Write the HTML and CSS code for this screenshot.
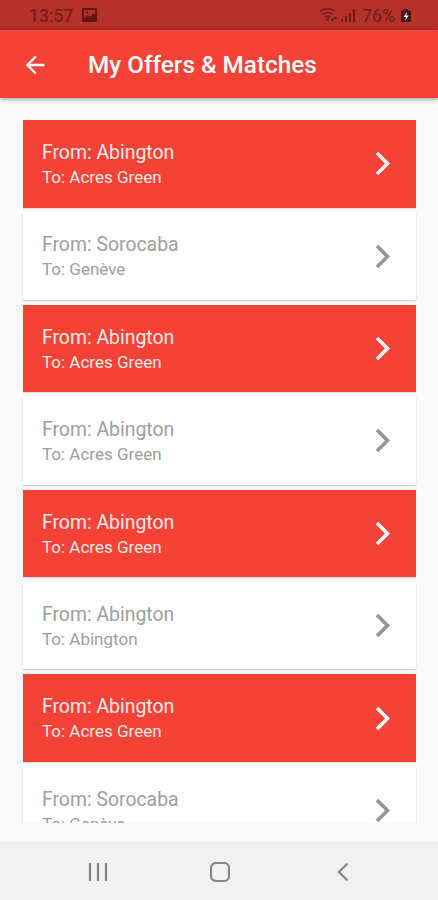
FILE: index.html
```html
<!DOCTYPE html>
<html lang="en">
<head>
    <meta charset="UTF-8">
    <meta name="viewport" content="width=device-width, initial-scale=1.0">
    <title>My Offers &amp; Matches</title>
    <link rel="stylesheet" href="styles.css">
</head>
<body>
<div class="status">
    <span class="time">13:57</span>
    <svg class="picture" viewBox="0 0 15 14">
        <rect width="15" height="14" rx="1.5" fill="#5e1717"/>
        <path d="M2 2h11v5l-2-2-2.500 4L6 7 2 10.500z" fill="#b5312a"/>
        <circle cx="5" cy="4.500" r="1.200" fill="#5e1717"/>
    </svg>
    <svg class="wifi" viewBox="0 0 19 16" fill="none" stroke="#6b1d1b" stroke-width="1.6">
        <path d="M1 4.500q7.500-6 15 0M3.500 7.500q5-4 10 0M6 10.400q2.500-2 5 0"/>
        <path d="M8.500 14l-2-2.300h4z" fill="#6b1d1b" stroke="none"/>
        <path d="M11.300 11.500h4l-2 3zM14.300 12l2-3 2 3z" fill="#6b1d1b" stroke="none"/>
    </svg>
    <svg class="signal" viewBox="0 0 14 13" fill="#6b1d1b">
        <path d="M0 10h2v3H0zM4 7h2v6H4zM8 4h2v9H8zM12 0h2v13h-2z"/>
    </svg>
    <span class="percent">76%</span>
    <svg class="battery" viewBox="0 0 10 13">
        <path d="M3 0h4v1.500h2q1 0 1 1V12q0 1-1 1H1q-1 0-1-1V2.500q0-1 1-1h2z" fill="#4c1010"/>
        <path d="M6 3L2.500 8H5l-.8 3.500L7.800 6.500H5.300z" fill="#fff"/>
    </svg>
</div>

<header class="appbar">
    <svg class="back" viewBox="0 0 24 24"><path d="M20 11H7.830l5.590-5.590L12 4l-8 8 8 8 1.410-1.410L7.830 13H20z"/></svg>
    <h1>My Offers &amp; Matches</h1>
</header>

<main class="list">
    <a class="card active">
        <div class="route"><p class="from">From: Abington</p><p class="to">To: Acres Green</p></div>
        <svg class="chevron" viewBox="0 0 16 25"><path d="M2 2l10.500 10.500L2 23"/></svg>
    </a>
    <a class="card">
        <div class="route"><p class="from">From: Sorocaba</p><p class="to">To: Genève</p></div>
        <svg class="chevron" viewBox="0 0 16 25"><path d="M2 2l10.500 10.500L2 23"/></svg>
    </a>
    <a class="card active">
        <div class="route"><p class="from">From: Abington</p><p class="to">To: Acres Green</p></div>
        <svg class="chevron" viewBox="0 0 16 25"><path d="M2 2l10.500 10.500L2 23"/></svg>
    </a>
    <a class="card">
        <div class="route"><p class="from">From: Abington</p><p class="to">To: Acres Green</p></div>
        <svg class="chevron" viewBox="0 0 16 25"><path d="M2 2l10.500 10.500L2 23"/></svg>
    </a>
    <a class="card active">
        <div class="route"><p class="from">From: Abington</p><p class="to">To: Acres Green</p></div>
        <svg class="chevron" viewBox="0 0 16 25"><path d="M2 2l10.500 10.500L2 23"/></svg>
    </a>
    <a class="card">
        <div class="route"><p class="from">From: Abington</p><p class="to">To: Abington</p></div>
        <svg class="chevron" viewBox="0 0 16 25"><path d="M2 2l10.500 10.500L2 23"/></svg>
    </a>
    <a class="card active">
        <div class="route"><p class="from">From: Abington</p><p class="to">To: Acres Green</p></div>
        <svg class="chevron" viewBox="0 0 16 25"><path d="M2 2l10.500 10.500L2 23"/></svg>
    </a>
    <a class="card">
        <div class="route"><p class="from">From: Sorocaba</p><p class="to">To: Genève</p></div>
        <svg class="chevron" viewBox="0 0 16 25"><path d="M2 2l10.500 10.500L2 23"/></svg>
    </a>
</main>

<nav class="navbar">
    <svg viewBox="0 0 20 20"><path d="M2 1v18M10 1v18M18 1v18"/></svg>
    <svg viewBox="0 0 20 20"><rect x="1" y="1" width="18" height="18" rx="5"/></svg>
    <svg viewBox="0 0 20 20"><path d="M14.500 1.500L6 10l8.500 8.500"/></svg>
</nav>
</body>
</html>
```

FILE: styles.css
```css
:root {
    --primary: #f44336;
    --primary-dark: #b5312a;
    --bg: #fafafa;
}
* { box-sizing: border-box; }
body {
    margin: 0;
    height: 900px;
    overflow: hidden;
    display: flex;
    flex-direction: column;
    background: var(--bg);
    font-family: Roboto, "Liberation Sans", sans-serif;
}
svg { display: block; flex: none; }
h1, p { margin: 0; }

/* status bar */
.status {
    height: 29.5px;
    flex: none;
    display: flex;
    align-items: center;
    padding: 1px 27px 0 29px;
    background: var(--primary-dark);
    color: #6b1d1b;
    font-size: 17.8px;
}
.time { width: 53px; }
.picture { width: 15px; height: 14px; }
.wifi { width: 19px; height: 16px; margin-left: auto; }
.signal { width: 14px; height: 13px; margin-left: 3px; }
.percent { width: 35px; margin: 0 4px 0 7px; }
.battery { width: 10px; height: 13px; }

/* app bar */
.appbar {
    height: 68px;
    flex: none;
    display: flex;
    align-items: center;
    padding: 2px 0 0 20.5px;
    position: relative;
    background: var(--primary);
    color: #fff;
    box-shadow: 0 1px 5px rgba(0,0,0,0.4);
}
.back { width: 28px; height: 28px; fill: #fff; }
.appbar h1 { margin-left: 39.5px; font-size: 24.3px; font-weight: 500; line-height: 30px; white-space: nowrap; }

/* offers */
.list {
    height: 725.5px;
    flex: none;
    padding: 22.5px 22px 0 22.5px;
    overflow: hidden;
}
.card {
    display: flex;
    align-items: center;
    justify-content: space-between;
    height: 87.5px;
    margin-bottom: 4.9px;
    padding: 0 25.5px 0 19.5px;
    background: #fff;
    color: #9e9e9e;
    box-shadow: 0 1px 1.5px rgba(0,0,0,0.22);
}
.card.active { background: var(--primary); color: #ffebe9; box-shadow: 0 1px 1px rgba(0,0,0,0.1); }
.route { padding-top: 1.5px; }
.from { font-size: 19.4px; line-height: 25px; }
.to { font-size: 17px; line-height: 24px; }
.chevron { width: 16px; height: 25px; fill: none; stroke: #959595; stroke-width: 3.6; }
.active .chevron { stroke: #fff; }

/* system navigation */
.navbar {
    height: 58px;
    flex: none;
    margin-top: auto;
    display: flex;
    align-items: center;
    justify-content: center;
    gap: 102.5px;
    padding: 1px 0 0 2px;
    background: #f1f1f1;
}
.navbar svg { width: 20px; height: 20px; fill: none; stroke: #858585; stroke-width: 2.2; }
```
